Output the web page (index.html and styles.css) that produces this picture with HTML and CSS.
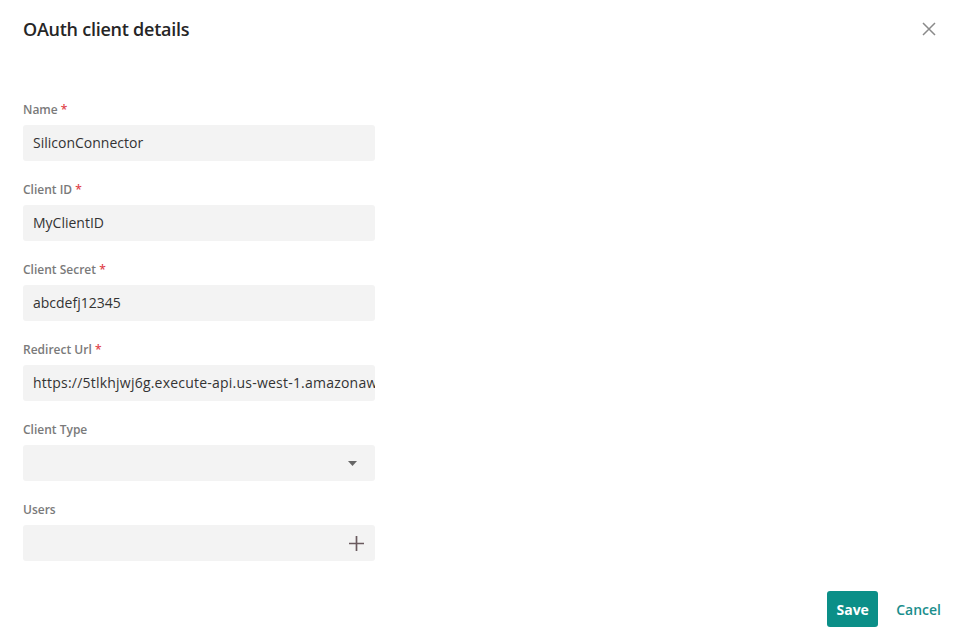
FILE: index.html
```html
<!DOCTYPE html>
<html lang="en">
<head>
  <meta charset="UTF-8">
  <title>OAuth client details</title>
  <link rel="stylesheet" href="styles.css">
</head>
<body>
  <div class="dialog">
    <header class="dialog-header">
      <h1>OAuth client details</h1>
      <button class="close-btn" aria-label="Close">
        <svg width="14" height="14" viewBox="0 0 14 14"><path d="M1 1L13 13M13 1L1 13" stroke="#8a8a8a" stroke-width="1.5" fill="none"/></svg>
      </button>
    </header>

    <form class="form">
      <div class="field">
        <label>Name <span class="req">*</span></label>
        <div class="input">SiliconConnector</div>
      </div>
      <div class="field">
        <label>Client ID <span class="req">*</span></label>
        <div class="input">MyClientID</div>
      </div>
      <div class="field">
        <label>Client Secret <span class="req">*</span></label>
        <div class="input">abcdefj12345</div>
      </div>
      <div class="field">
        <label>Redirect Url <span class="req">*</span></label>
        <div class="input url">https://5tlkhjwj6g.execute-api.us-west-1.amazonaws.com/prod/callback</div>
      </div>
      <div class="field">
        <label>Client Type</label>
        <div class="input select">
          <svg class="caret" width="9" height="5" viewBox="0 0 9 5"><path d="M0 0H9L4.5 5Z" fill="#666"/></svg>
        </div>
      </div>
      <div class="field">
        <label>Users</label>
        <div class="input select">
          <svg class="plus" width="15" height="15" viewBox="0 0 15 15"><path d="M7.5 0V15M0 7.5H15" stroke="#6a5a5e" stroke-width="1.7" fill="none"/></svg>
        </div>
      </div>
    </form>

    <footer class="dialog-footer">
      <button class="btn-save">Save</button>
      <button class="btn-cancel">Cancel</button>
    </footer>
  </div>
</body>
</html>
```

FILE: styles.css
```css
body {
  margin: 0;
  font-family: 'Open Sans', 'Noto Sans', sans-serif;
  background: #fff;
  color: #333;
}
.dialog {
  width: 956px;
  height: 635px;
  box-sizing: border-box;
  padding: 0 15px 0 23px;
  display: flex;
  flex-direction: column;
}
.dialog-header {
  display: flex;
  justify-content: space-between;
  align-items: center;
  height: 57px;
}
.dialog-header h1 {
  margin: 0;
  font-size: 18px;
  font-weight: 600;
  color: #262626;
  letter-spacing: -0.25px;
}
.close-btn {
  background: none;
  border: none;
  padding: 0;
  margin-right: 5px;
  width: 14px;
  height: 14px;
  display: flex;
  cursor: pointer;
}
.form {
  margin-top: 45px;
  width: 352px;
}
.field {
  margin-bottom: 21px;
}
.field label {
  display: block;
  font-size: 12px;
  line-height: 16px;
  font-weight: 600;
  color: #7a7a7a;
  margin-bottom: 7px;
}
.req {
  color: #e0434b;
}
.input {
  height: 36px;
  background: #f3f3f3;
  border-radius: 3px;
  box-sizing: border-box;
  padding: 0 10px;
  font-size: 14px;
  line-height: 36px;
  color: #333;
  white-space: nowrap;
  overflow: hidden;
}
.url {
  letter-spacing: 0.22px;
}
.select {
  display: flex;
  justify-content: flex-end;
  align-items: center;
}
.caret {
  margin-right: 8px;
}
.plus {
  margin-right: 1px;
}
.dialog-footer {
  margin-top: 9px;
  display: flex;
  justify-content: flex-end;
  align-items: center;
  gap: 18px;
}
.btn-save {
  background: #0b8f88;
  color: #fff;
  border: none;
  border-radius: 3px;
  font-family: inherit;
  font-size: 14px;
  font-weight: 700;
  width: 51px;
  height: 36px;
  padding: 0;
}
.btn-cancel {
  background: none;
  border: none;
  color: #1a8e8c;
  font-family: inherit;
  font-size: 14px;
  font-weight: 600;
  padding: 0;
}
```
